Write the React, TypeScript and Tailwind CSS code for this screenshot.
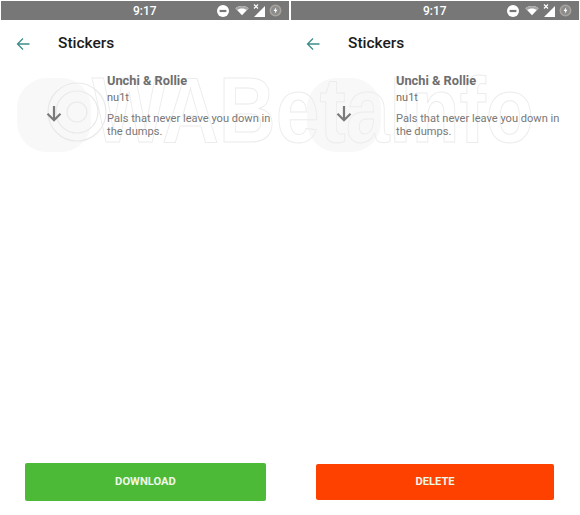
function StatusIcons() {
  return (
    <div className="flex items-center">
      <svg width="12" height="12" viewBox="0 0 12 12"><circle cx="6" cy="6" r="6" fill="#fff" /><rect x="2.6" y="4.9" width="6.8" height="2.2" fill="#777" /></svg>
      <svg width="14" height="11" viewBox="0 0 16 12" className="ml-[6px]"><path d="M0.5 3.5 C4.5 0 11.5 0 15.5 3.5 L8 11.5 Z" fill="#fff" /><path d="M0.5 3.5 C4.5 0 11.5 0 15.5 3.5 L13.6 5.5 C10 3 6 3 2.4 5.5 Z" fill="#a5a5a5" /></svg>
      <svg width="12" height="14" viewBox="0 0 12 14" className="ml-[4px]"><path d="M12 2 V13 H1 Z" fill="#fff" /><path d="M1 0.5 L5 4.5 M5 0.5 L1 4.5" stroke="#fff" strokeWidth="1.2" /></svg>
      <svg width="13" height="13" viewBox="0 0 14 14" className="ml-[4px]"><circle cx="7" cy="7" r="5.6" fill="#8c8c8c" stroke="#aaa49f" strokeWidth="1.6" /><path d="M7.8 3.4 L4.9 7.6 H6.7 L6.2 10.6 L9.1 6.3 H7.3 Z" fill="#fff" /></svg>
    </div>
  );
}

function Panel({ label, color, buttonClass, textClass }: { label: string; color: string; buttonClass: string; textClass: string }) {
  return (
    <div className="relative flex h-[514px] w-[289px] shrink-0 flex-col">
      <div className="relative ml-px flex h-[19px] items-center bg-[#777777] pr-[7px]">
        <span className="ml-[132px] text-[12px] font-medium text-white [font-family:Roboto,sans-serif]">9:17</span>
        <div className="ml-auto"><StatusIcons /></div>
      </div>
      <div className="relative flex h-[48px] items-center">
        <svg width="14" height="14" viewBox="0 0 14 14" fill="none" stroke="#3f8f88" strokeWidth="1.3" className="ml-[16px]">
          <path d="M13.5 7 H1.5 M7 1.5 L1.5 7 L7 12.5" />
        </svg>
        <span className="ml-[28px] text-[15.5px] font-medium text-[#1c1c1c] [font-family:Roboto,sans-serif]">Stickers</span>
      </div>
      <div className="relative flex items-start pt-[5px]">
        <div className="ml-[46px] mt-[32px] w-[16px]">
          <svg width="16" height="17" viewBox="0 0 16 17" fill="none" stroke="#7a7a7a" strokeWidth="2.2">
            <path d="M8 1 V15 M1.5 8.8 L8 15.2 L14.5 8.8" />
          </svg>
        </div>
        <div className={`flex-1 [font-family:Roboto,sans-serif] ${textClass}`}>
          <div className="text-[12.8px] font-bold leading-[16px] text-[#6e6e6e]">Unchi &amp; Rollie</div>
          <div className="mt-px text-[11px] leading-[16px] text-[#707070]">nu1t</div>
          <div className="mt-[6px] text-[11.1px] leading-[13px] text-[#787878]">Pals that never leave you down in<br />the dumps.</div>
        </div>
      </div>
      <div className="flex-1" />
      <div className={`flex items-center justify-center rounded-[2px] pt-px text-[11.2px] font-bold text-[#eef7ea] [font-family:Roboto,sans-serif] ${color} ${buttonClass}`}>{label}</div>
    </div>
  );
}

export default function App() {
  return (
    <div className="relative h-[515px] w-[580px] overflow-hidden bg-white">
      <div className="absolute left-[17px] top-[78px] h-[74px] w-[74px] rounded-[30px] bg-[#f8f8f8]" />
      <div className="absolute left-[307px] top-[78px] h-[74px] w-[74px] rounded-[30px] bg-[#f8f8f8]" />
      <div className="pointer-events-none absolute left-[92px] top-[60px] origin-left scale-x-[0.856] whitespace-nowrap text-[92px] font-bold leading-[100px] text-transparent [-webkit-text-stroke:1px_#ececec] [font-family:'Liberation_Sans',sans-serif]">WABetaInfo</div>
      <svg width="62" height="76" viewBox="0 0 62 76" fill="none" stroke="#e9e9e9" strokeWidth="1.2" className="pointer-events-none absolute left-[46px] top-[75px]">
        <circle cx="31" cy="37" r="29" />
        <circle cx="31" cy="37" r="21" />
        <circle cx="31" cy="37" r="10" />
      </svg>
      <div className="relative flex pt-px">
        <Panel label="DOWNLOAD" color="bg-[#4dba37]" buttonClass="mb-[14px] ml-[25px] h-[38px] w-[241px]" textClass="ml-[45px]" />
        <div className="w-px shrink-0" />
        <Panel label="DELETE" color="bg-[#ff4100]" buttonClass="mb-[15px] ml-[26px] h-[36px] w-[238px]" textClass="ml-[44px]" />
      </div>
    </div>
  );
}
